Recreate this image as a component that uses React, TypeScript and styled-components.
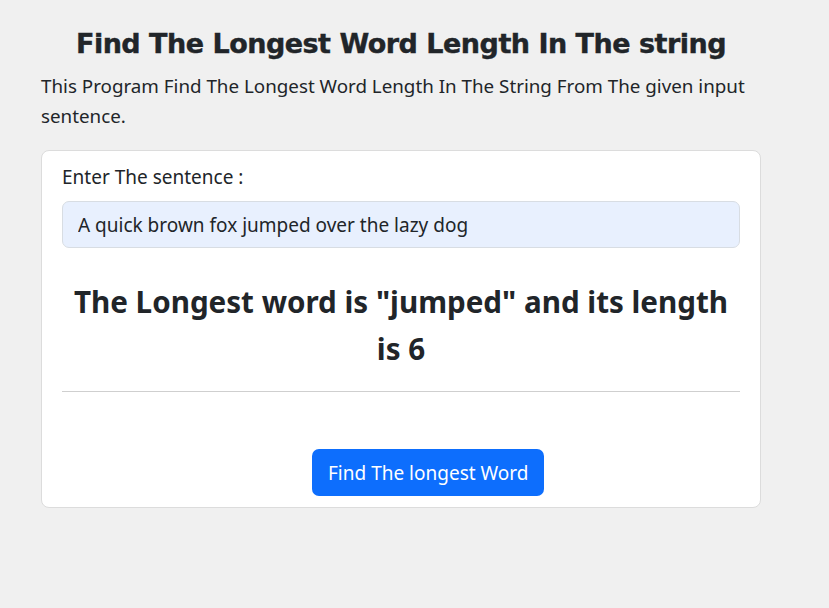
import React from "react";
import styled, { createGlobalStyle } from "styled-components";

const Global = createGlobalStyle`
  html, body { margin: 0; padding: 0; background: #f0f0f0; }
  body { font-family: "Noto Sans", "Open Sans", sans-serif; color: #212529; }
`;

const Page = styled.div`
  width: 829px;
  height: 608px;
  box-sizing: border-box;
  padding: 24px 68px 0 41px;
`;

const Title = styled.h1`
  margin: 0;
  font-family: "DejaVu Sans", Verdana, sans-serif;
  font-weight: 700;
  font-size: 27px;
  letter-spacing: -0.5px;
  -webkit-text-stroke: 0.4px #212529;
  line-height: 40px;
  text-align: center;
  color: #212529;
`;

const Intro = styled.p`
  margin: 7px -20px 19px 0;
  font-size: 18.8px;
  line-height: 30px;
  color: #212529;
`;

const Card = styled.div`
  width: 720px;
  box-sizing: border-box;
  background: #fff;
  border: 1px solid #dcdcdc;
  border-radius: 8px;
  padding: 12px 20px 11px 20px;
  display: flex;
  flex-direction: column;
`;

const Label = styled.label`
  font-size: 19px;
  line-height: 28px;
  margin-bottom: 10px;
`;

const Input = styled.input`
  box-sizing: border-box;
  width: 100%;
  height: 47px;
  padding: 0 15px;
  font-family: inherit;
  font-size: 19px;
  color: #212529;
  background: #e8f0fe;
  border: 1px solid #d8dde3;
  border-radius: 7px;
  outline: none;
`;

const Result = styled.h2`
  margin: 30px 0 0 0;
  font-size: 29.6px;
  line-height: 47px;
  font-weight: 700;
  text-align: center;
  color: #212529;
`;

const Rule = styled.hr`
  margin: 19px 0 0 0;
  border: 0;
  border-top: 1px solid #cfcfcf;
`;

const ButtonRow = styled.div`
  display: flex;
  padding: 57px 0 0 250px;
`;

const Button = styled.button`
  height: 47px;
  padding: 0 16px;
  font-family: inherit;
  font-size: 19px;
  color: #fff;
  background: #0d6efd;
  border: 0;
  border-radius: 7px;
`;

export default function App() {
  return (
    <>
      <Global />
      <Page>
        <Title>Find The Longest Word Length In The string</Title>
        <Intro>
          This Program Find The Longest Word Length In The String From The given input sentence.
        </Intro>
        <Card>
          <Label>Enter The sentence :</Label>
          <Input defaultValue="A quick brown fox jumped over the lazy dog" />
          <Result>The Longest word is "jumped" and its length is 6</Result>
          <Rule />
          <ButtonRow>
            <Button>Find The longest Word</Button>
          </ButtonRow>
        </Card>
      </Page>
    </>
  );
}
